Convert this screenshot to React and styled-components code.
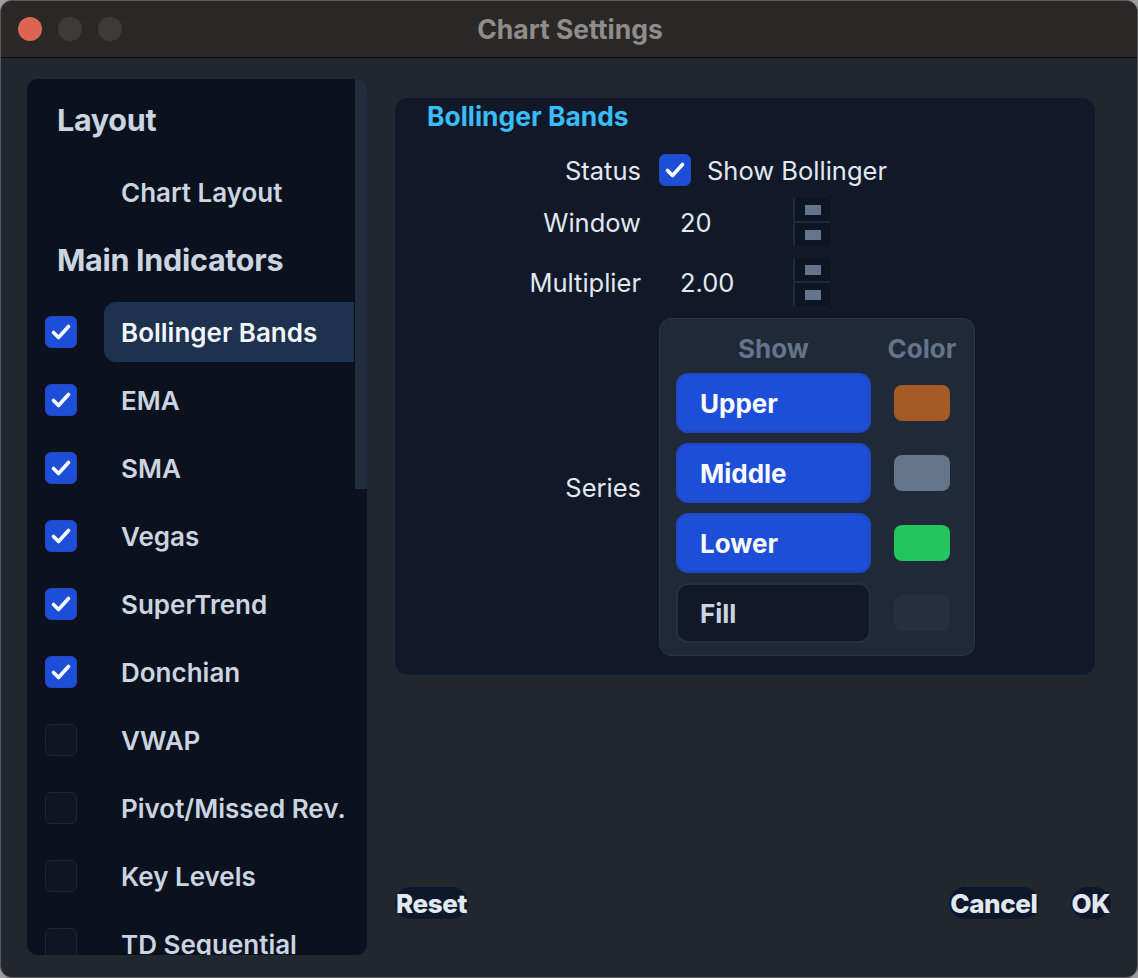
import React from "react";
import styled, { createGlobalStyle } from "styled-components";

const Global = createGlobalStyle`
  html, body {
    margin: 0;
    padding: 0;
    background: #9c9c9c;
  }
  body {
    font-family: Inter, "Noto Sans", "Liberation Sans", sans-serif;
    -webkit-font-smoothing: antialiased;
  }
  * { box-sizing: border-box; }
`;

const Window = styled.div`
  width: 1138px;
  height: 978px;
  border-radius: 12px;
  overflow: hidden;
  background: #22262d;
  border: 1px solid #5a5a5a;
  display: flex;
  flex-direction: column;
`;

const TitleBar = styled.div`
  position: relative;
  height: 57px;
  flex: none;
  background: #2a2826;
  border-bottom: 1px solid #0e0e0e;
  display: flex;
  align-items: center;
  justify-content: center;
`;

const Lights = styled.div`
  position: absolute;
  left: 17px;
  top: 16px;
  display: flex;
  gap: 16px;
`;

const Light = styled.span`
  width: 24px;
  height: 24px;
  border-radius: 50%;
  background: ${(p) => p.$color};
`;

const Title = styled.div`
  font-size: 26.5px;
  font-weight: 700;
  color: #8f8d8b;
  margin-left: 2px;
`;

const Body = styled.div`
  flex: 1;
  min-height: 0;
  display: grid;
  grid-template-columns: 342px 1fr;
  column-gap: 26px;
  padding: 20px 25px 21px 25px;
`;

const Sidebar = styled.aside`
  display: flex;
  background: #0b121d;
  border: 1px solid #1c2839;
  border-radius: 12px;
  overflow: hidden;
  min-height: 0;
`;

const NavList = styled.div`
  flex: 1;
  min-width: 0;
  display: flex;
  flex-direction: column;
  gap: 8px;
  padding: 19px 0 0 18px;
`;

const ScrollTrack = styled.div`
  width: 13px;
  flex: none;
  display: flex;
  flex-direction: column;
  padding-left: 1px;
`;

const ScrollThumb = styled.div`
  height: 410px;
  background: #222e40;
`;

const NavHeading = styled.div`
  height: 42px;
  flex: none;
  display: flex;
  align-items: center;
  padding-left: 12px;
  margin: ${(p) => (p.$first ? "0 0 14px" : "8px 0 14px")};
  font-size: 30.5px;
  font-weight: 700;
  color: #cbd5e1;
  letter-spacing: -0.3px;
  white-space: nowrap;
`;

const NavRow = styled.div`
  height: 60px;
  flex: none;
  display: flex;
  align-items: center;
  gap: 27px;
`;

const Box = styled.span`
  width: 32px;
  height: 32px;
  flex: none;
  border-radius: 6px;
  display: flex;
  align-items: center;
  justify-content: center;
  background: ${(p) => (p.$on ? "#1d4ed8" : "#0f1623")};
  border: 1px solid ${(p) => (p.$on ? "#2448c0" : "#1d2635")};
  visibility: ${(p) => (p.$hidden ? "hidden" : "visible")};
`;

const NavLabel = styled.div`
  flex: 1;
  height: 60px;
  display: flex;
  align-items: center;
  padding-left: 17px;
  border-radius: 12px 0 0 12px;
  background: ${(p) => (p.$active ? "#1e3250" : "transparent")};
  font-size: 26px;
  font-weight: 600;
  color: ${(p) => (p.$active ? "#f1f5f9" : "#cbd5e1")};
  white-space: nowrap;
`;

const Main = styled.section`
  display: flex;
  flex-direction: column;
  padding: 19px 0 36px;
  min-height: 0;
`;

const Panel = styled.div`
  margin-right: 16px;
  background: #111827;
  border: 1px solid #1f2a3a;
  border-radius: 14px;
  padding: 2px 0 19px;
`;

const PanelTitle = styled.div`
  height: 32px;
  display: flex;
  align-items: center;
  padding-left: 32px;
  margin-bottom: 22px;
  font-size: 26.4px;
  font-weight: 700;
  color: #38bdf8;
`;

const Form = styled.div`
  display: grid;
  grid-template-columns: 246px auto;
  column-gap: 18px;
  row-gap: 12px;
  align-items: center;
  justify-content: start;
`;

const Label = styled.div`
  text-align: right;
  font-size: 25.5px;
  color: #e2e8f0;
`;

const Inline = styled.div`
  display: flex;
  align-items: center;
  gap: 16px;
  font-size: 25.5px;
  color: #e2e8f0;
`;

const NumberField = styled.div`
  display: flex;
  align-items: center;
  height: 48px;
`;

const NumberValue = styled.div`
  width: 134px;
  padding-left: 21px;
  font-size: 25.5px;
  color: #e2e8f0;
`;

const Spinner = styled.div`
  width: 37px;
  height: 48px;
  display: flex;
  flex-direction: column;
  border-left: 2px solid #1e293b;
`;

const SpinButton = styled.div`
  flex: 1;
  display: flex;
  align-items: center;
  justify-content: center;
  background: #0e1522;
  border-top: ${(p) => (p.$lower ? "2px solid #1e293b" : "none")};
  &::after {
    content: "";
    width: 16px;
    height: 10px;
    background: #64748b;
  }
`;

const SeriesTable = styled.div`
  width: 316px;
  background: #1f2937;
  border: 1px solid #2a3445;
  border-radius: 12px;
  padding: 14px 13px 12px 16px;
  display: grid;
  grid-template-columns: 195px 78px;
  column-gap: 12px;
  row-gap: 10px;
  align-items: center;
`;

const ColHead = styled.div`
  height: 30px;
  display: flex;
  align-items: center;
  justify-content: center;
  font-size: 26px;
  font-weight: 700;
  color: #64748b;
`;

const Toggle = styled.div`
  height: 60px;
  border-radius: 12px;
  display: flex;
  align-items: center;
  padding-left: 22px;
  font-size: 26px;
  font-weight: 700;
  background: ${(p) => (p.$on ? "#1d4ed8" : "#111827")};
  border: 2px solid ${(p) => (p.$on ? "#2147c2" : "#253042")};
  color: ${(p) => (p.$on ? "#f8fafc" : "#cbd5e1")};
`;

const Swatch = styled.div`
  justify-self: center;
  width: 56px;
  height: 36px;
  border-radius: 8px;
  background: ${(p) => p.$color};
`;

const Footer = styled.div`
  margin-top: auto;
  display: flex;
  align-items: center;
  gap: 30px;
`;

const Spacer = styled.div`
  flex: 1;
`;

const PillButton = styled.button`
  height: 34px;
  padding: 0 1px;
  border-radius: 17px;
  background: #0f172a;
  border: 1px solid #1e293b;
  color: #e2e8f0;
  font-family: inherit;
  font-size: 26px;
  font-weight: 800;
  letter-spacing: -0.4px;
  cursor: pointer;
  display: flex;
  align-items: center;
`;

const Check = () => (
  <svg width="24" height="24" viewBox="0 0 24 24" fill="none">
    <path
      d="M4.5 12.5l5 5 10-11"
      stroke="#fff"
      strokeWidth="3.6"
      strokeLinecap="round"
      strokeLinejoin="round"
    />
  </svg>
);

const CheckBox = ({ on, hidden }) => (
  <Box $on={on} $hidden={hidden}>
    {on && <Check />}
  </Box>
);

const indicators = [
  { name: "Bollinger Bands", on: true, active: true },
  { name: "EMA", on: true },
  { name: "SMA", on: true },
  { name: "Vegas", on: true },
  { name: "SuperTrend", on: true },
  { name: "Donchian", on: true },
  { name: "VWAP", on: false },
  { name: "Pivot/Missed Rev.", on: false },
  { name: "Key Levels", on: false },
  { name: "TD Sequential", on: false },
];

const series = [
  { name: "Upper", on: true, color: "#a65a26" },
  { name: "Middle", on: true, color: "#64748b" },
  { name: "Lower", on: true, color: "#22c55e" },
  { name: "Fill", on: false, color: "#262f3d" },
];

const NumberInput = ({ value }) => (
  <NumberField>
    <NumberValue>{value}</NumberValue>
    <Spinner>
      <SpinButton />
      <SpinButton $lower />
    </Spinner>
  </NumberField>
);

export default function App() {
  return (
    <>
      <Global />
      <Window>
        <TitleBar>
          <Lights>
            <Light $color="#dd6450" />
            <Light $color="#3d3b39" />
            <Light $color="#3d3b39" />
          </Lights>
          <Title>Chart Settings</Title>
        </TitleBar>
        <Body>
          <Sidebar>
            <NavList>
              <NavHeading $first>Layout</NavHeading>
              <NavRow>
                <CheckBox hidden />
                <NavLabel>Chart Layout</NavLabel>
              </NavRow>
              <NavHeading>Main Indicators</NavHeading>
              {indicators.map((it) => (
                <NavRow key={it.name}>
                  <CheckBox on={it.on} />
                  <NavLabel $active={it.active}>{it.name}</NavLabel>
                </NavRow>
              ))}
            </NavList>
            <ScrollTrack>
              <ScrollThumb />
            </ScrollTrack>
          </Sidebar>
          <Main>
            <Panel>
              <PanelTitle>Bollinger Bands</PanelTitle>
              <Form>
                <Label>Status</Label>
                <Inline>
                  <CheckBox on />
                  <span>Show Bollinger</span>
                </Inline>
                <Label>Window</Label>
                <NumberInput value="20" />
                <Label>Multiplier</Label>
                <NumberInput value="2.00" />
                <Label>Series</Label>
                <SeriesTable>
                  <ColHead>Show</ColHead>
                  <ColHead>Color</ColHead>
                  {series.map((s) => (
                    <React.Fragment key={s.name}>
                      <Toggle $on={s.on}>{s.name}</Toggle>
                      <Swatch $color={s.color} />
                    </React.Fragment>
                  ))}
                </SeriesTable>
              </Form>
            </Panel>
            <Footer>
              <PillButton>Reset</PillButton>
              <Spacer />
              <PillButton>Cancel</PillButton>
              <PillButton>OK</PillButton>
            </Footer>
          </Main>
        </Body>
      </Window>
    </>
  );
}
